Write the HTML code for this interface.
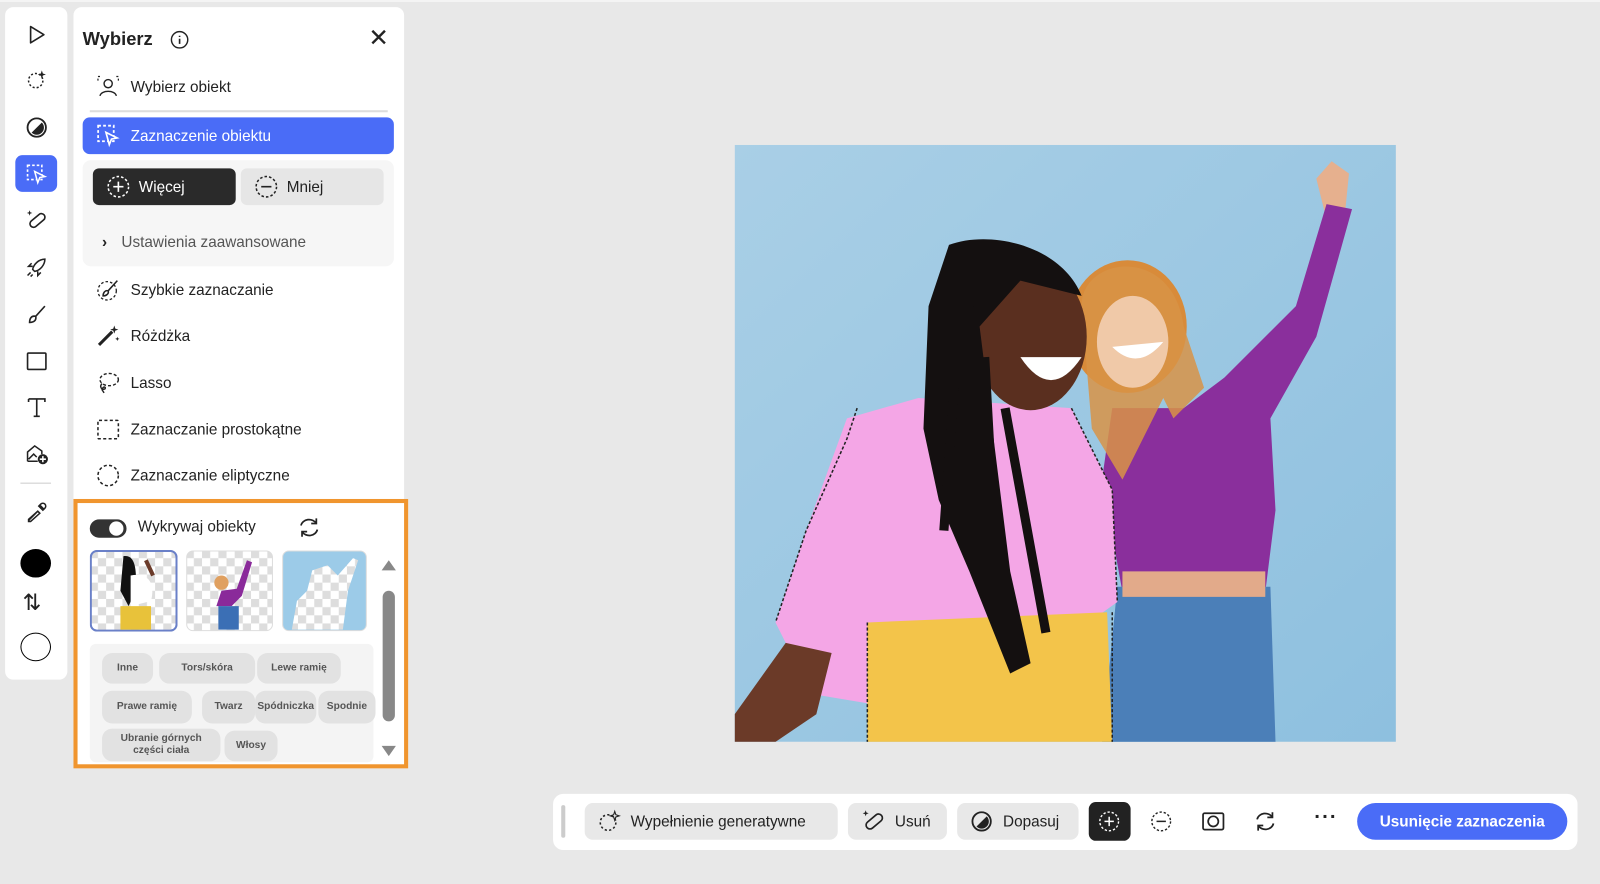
<!DOCTYPE html>
<html><head><meta charset="utf-8"><style>
*{box-sizing:border-box;margin:0;padding:0}
body{width:1600px;height:884px;background:#e8e8e8;font-family:"Liberation Sans",sans-serif;position:relative;overflow:hidden;color:#222}
#w{position:absolute;left:0;top:0;width:1568px;height:866px;transform:scale(1.0204);transform-origin:0 0}
.abs{position:absolute}
.tb{left:5px;top:7px;width:61px;height:659px;background:#fff;border-radius:8px}
.tb svg{position:absolute;left:20px}
.panel{left:72px;top:7px;width:324px;height:746px;background:#fff;border-radius:8px}
.item{position:absolute;left:22px;font-size:15px;color:#222;display:flex;align-items:center}
.item svg{margin-right:10px}
.btn{position:absolute;display:flex;align-items:center;font-size:15px;border-radius:6px}
.chip{position:absolute;background:#e2e2e2;border-radius:10px;font-size:10px;font-weight:bold;color:#555;text-align:center;display:flex;align-items:center;justify-content:center;line-height:12px}
.bb{position:absolute;top:787px;height:36px;border-radius:8px;background:#e8e8e8;display:flex;align-items:center;font-size:15px;color:#222}
</style></head><body><div id="w">
<div class="abs" style="left:0;top:0;width:1600px;height:2px;background:#f4f4f4"></div>
<div class="abs tb">
<svg style="top:16px" width="22" height="22" viewBox="0 0 22 22"><path d="M5 3 L18 11 L5 19 Z" fill="none" stroke="#222" stroke-width="1.6" stroke-linejoin="round"/></svg>
<svg style="top:60px" width="22" height="22" viewBox="0 0 22 22"><circle cx="10" cy="12" r="7" fill="none" stroke="#222" stroke-width="1.5" stroke-dasharray="2 2"/><path d="M16 2 l1 3 3 1 -3 1 -1 3 -1 -3 -3 -1 3 -1z" fill="#222"/></svg>
<svg style="top:107px" width="22" height="22" viewBox="0 0 22 22"><circle cx="11" cy="11" r="9" fill="none" stroke="#222" stroke-width="1.8"/><path d="M16 6 A7 7 0 0 1 6 16 Z" fill="#222"/></svg>
<div class="abs" style="left:10px;top:145px;width:41px;height:36px;background:#4a6cf7;border-radius:7px"></div>
<svg style="top:153px" width="22" height="22" viewBox="0 0 22 22"><rect x="2" y="2" width="14" height="14" fill="none" stroke="#fff" stroke-width="1.6" stroke-dasharray="2.5 2"/><path d="M9 8 L19 13 L14 14 L12 19 Z" fill="#4a6cf7" stroke="#fff" stroke-width="1.5"/></svg>
<svg style="top:198px" width="22" height="22" viewBox="0 0 22 22"><rect x="3" y="8" width="17" height="7" rx="3.5" transform="rotate(-40 11 11)" fill="none" stroke="#222" stroke-width="1.6"/><path d="M4 1 l.7 2 2 .7-2 .7-.7 2-.7-2-2-.7 2-.7z" fill="#222"/></svg>
<svg style="top:244px" width="22" height="22" viewBox="0 0 22 22"><path d="M19 3 C13 3 8 8 7 13 L9 15 C14 14 19 9 19 3Z M7 10 L3 10 6 7 M12 15 L12 19 15 16 M5 16 L2 19 M7 18 L5 20" fill="none" stroke="#222" stroke-width="1.5"/></svg>
<svg style="top:290px" width="22" height="22" viewBox="0 0 22 22"><path d="M19 3 L10 13 M10 13 C6 12 4 15 4 19 C8 19 11 17 10 13Z" fill="none" stroke="#222" stroke-width="1.6"/></svg>
<svg style="top:336px" width="22" height="22" viewBox="0 0 22 22"><rect x="2" y="3" width="18" height="16" rx="1" fill="none" stroke="#222" stroke-width="1.6"/></svg>
<svg style="top:381px" width="22" height="22" viewBox="0 0 22 22"><path d="M3 3 H19 V6 M3 3 V6 M11 3 V20 M8 20 H14" fill="none" stroke="#222" stroke-width="1.6"/></svg>
<svg style="top:426px" width="24" height="24" viewBox="0 0 24 24"><path d="M2 19 V10 L9 4 L16 9 V12 M2 19 H12 M3 17 L8 12 11 15" fill="none" stroke="#222" stroke-width="1.5"/><circle cx="17" cy="17" r="5" fill="#222"/><path d="M17 14v6M14 17h6" stroke="#fff" stroke-width="1.5"/></svg>
<div class="abs" style="left:15px;top:466px;width:30px;height:1px;background:#ccc"></div>
<svg style="top:484px" width="22" height="22" viewBox="0 0 22 22"><path d="M3 19 L12 10 M14 4 L18 8 M12 10 L14 12 L5 20 L3 20 L3 18 Z M13 5 L17 9 L19 7 A2.8 2.8 0 0 0 15 3Z" fill="none" stroke="#222" stroke-width="1.5"/></svg>
<div class="abs" style="left:15px;top:531px;width:30px;height:28px;background:#000;border-radius:50%"></div>
<div class="abs" style="left:17px;top:573px;font-size:22px;line-height:22px">⇅</div>
<div class="abs" style="left:15px;top:613px;width:30px;height:28px;border:1.5px solid #000;border-radius:50%"></div>
</div>

<div class="abs panel">
<div class="abs" style="left:9px;top:21px;font-size:18px;font-weight:bold">Wybierz</div>
<svg class="abs" style="left:94px;top:22px" width="20" height="20" viewBox="0 0 20 20"><circle cx="10" cy="10" r="8" fill="none" stroke="#222" stroke-width="1.4"/><path d="M10 9v5M10 6v1.2" stroke="#222" stroke-width="1.6"/></svg>
<div class="abs" style="left:289px;top:16px;font-size:24px">✕</div>
<div class="item" style="top:66px"><svg width="24" height="24" viewBox="0 0 24 24"><circle cx="12" cy="9" r="4" fill="none" stroke="#222" stroke-width="1.4"/><path d="M4 21 C5 15 19 15 20 21" fill="none" stroke="#222" stroke-width="1.4"/><path d="M2 6V2h4M22 6V2h-4" fill="none" stroke="#222" stroke-width="1.2" stroke-dasharray="2 2"/></svg>Wybierz obiekt</div>
<div class="abs" style="left:16px;top:101px;width:292px;height:2px;background:#ddd"></div>
<div class="abs" style="left:9px;top:108px;width:305px;height:36px;background:#4a6cf7;border-radius:7px"></div>
<div class="item" style="top:114px;color:#fff"><svg width="24" height="24" viewBox="0 0 22 22"><rect x="2" y="2" width="14" height="14" fill="none" stroke="#fff" stroke-width="1.6" stroke-dasharray="2.5 2"/><path d="M9 8 L19 13 L14 14 L12 19 Z" fill="#4a6cf7" stroke="#fff" stroke-width="1.5"/></svg>Zaznaczenie obiektu</div>
<div class="abs" style="left:9px;top:150px;width:305px;height:104px;background:#f6f6f6;border-radius:8px"></div>
<div class="btn" style="left:19px;top:158px;width:140px;height:36px;background:#2a2a2a;color:#fff;padding-left:13px"><svg width="24" height="24" viewBox="0 0 24 24" style="margin-right:8px"><circle cx="12" cy="12" r="10" fill="none" stroke="#fff" stroke-width="1.5" stroke-dasharray="2.5 2"/><path d="M12 7v10M7 12h10" stroke="#fff" stroke-width="1.6"/></svg>Więcej</div>
<div class="btn" style="left:164px;top:158px;width:140px;height:36px;background:#e6e6e6;padding-left:13px"><svg width="24" height="24" viewBox="0 0 24 24" style="margin-right:8px"><circle cx="12" cy="12" r="10" fill="none" stroke="#222" stroke-width="1.5" stroke-dasharray="2.5 2"/><path d="M7 12h10" stroke="#222" stroke-width="1.6"/></svg>Mniej</div>
<div class="abs" style="left:28px;top:222px;font-size:15px;color:#555"><span style="color:#222;font-weight:bold;margin-right:14px">›</span>Ustawienia zaawansowane</div>
<div class="item" style="top:265px"><svg width="24" height="24" viewBox="0 0 24 24"><circle cx="11" cy="13" r="9" fill="none" stroke="#222" stroke-width="1.3" stroke-dasharray="2.5 2"/><path d="M21 3 L12 13 M12 13 C9 12 7 15 7 18 C10 18 13 16 12 13Z" fill="#fff" stroke="#222" stroke-width="1.5"/></svg>Szybkie zaznaczanie</div>
<div class="item" style="top:310px"><svg width="24" height="24" viewBox="0 0 24 24"><path d="M3 21 L16 8" stroke="#222" stroke-width="3"/><path d="M18 2 l1 3 3 1-3 1-1 3-1-3-3-1 3-1z M21 13 l.6 1.5 1.5.6-1.5.6-.6 1.5-.6-1.5-1.5-.6 1.5-.6z" fill="#222"/></svg>Różdżka</div>
<div class="item" style="top:356px"><svg width="24" height="24" viewBox="0 0 24 24"><ellipse cx="13" cy="9" rx="9" ry="6" fill="none" stroke="#222" stroke-width="1.4" stroke-dasharray="3 2"/><path d="M6 13 C3 16 6 20 9 18 C10 16 7 15 6 19 L8 22" fill="none" stroke="#222" stroke-width="1.4"/></svg>Lasso</div>
<div class="item" style="top:402px"><svg width="24" height="24" viewBox="0 0 24 24"><rect x="2" y="3" width="20" height="18" rx="1" fill="none" stroke="#222" stroke-width="1.5" stroke-dasharray="3 2.3"/></svg>Zaznaczanie prostokątne</div>
<div class="item" style="top:447px"><svg width="24" height="24" viewBox="0 0 24 24"><circle cx="12" cy="12" r="10" fill="none" stroke="#222" stroke-width="1.5" stroke-dasharray="3 2.3"/></svg>Zaznaczanie eliptyczne</div>
<div class="abs" style="left:0;top:482px;width:328px;height:264px;border:4px solid #f0952e;background:#fff"></div>
<div class="abs" style="left:16px;top:502px;width:36px;height:18px;background:#333;border-radius:9px"></div>
<div class="abs" style="left:35px;top:504px;width:14px;height:14px;background:#fff;border-radius:50%"></div>
<div class="abs" style="left:63px;top:501px;font-size:15px">Wykrywaj obiekty</div>
<svg class="abs" style="left:219px;top:499px" width="24" height="22" viewBox="0 0 24 22"><path d="M4 9 A8 7 0 0 1 19 7 M20 13 A8 7 0 0 1 5 15" fill="none" stroke="#222" stroke-width="1.7"/><path d="M19 2v5h-5M5 20v-5h5" fill="none" stroke="#222" stroke-width="1.7"/></svg>
<svg class="abs" style="left:16px;top:532px" width="86" height="80" viewBox="0 0 86 80"><defs><pattern id="ck" width="16" height="16" patternUnits="userSpaceOnUse"><rect width="16" height="16" fill="#fff"/><rect width="8" height="8" fill="#ddd"/><rect x="8" y="8" width="8" height="8" fill="#ddd"/></pattern></defs><rect x="1" y="1" width="84" height="78" rx="6" fill="url(#ck)" stroke="#6a80c8" stroke-width="2"/><path d="M33 6 C45 4 46 20 45 40 L38 55 L30 40Z" fill="#111"/><path d="M40 25 C55 22 65 30 60 50 L40 55Z" fill="#fff"/><path d="M30 55 H60 V78 H30Z" fill="#e8c23a"/><path d="M55 10 L62 25" stroke="#6b3b2a" stroke-width="4"/></svg>
<svg class="abs" style="left:110px;top:532px" width="86" height="80" viewBox="0 0 86 80"><rect x="1" y="1" width="84" height="78" rx="6" fill="url(#ck)" stroke="#ddd"/><circle cx="35" cy="32" r="7" fill="#e0a060"/><path d="M35 40 L50 38 60 10 65 12 55 45 45 55 30 55Z" fill="#8a2a9a"/><path d="M32 55 H52 V78 H32Z" fill="#3b6fb5"/></svg>
<svg class="abs" style="left:204px;top:532px" width="84" height="80" viewBox="0 0 84 80"><rect x="1" y="1" width="82" height="78" rx="6" fill="#9ccbe8" stroke="#ddd"/><path d="M10 78 L15 50 25 40 30 20 45 15 55 25 70 8 75 10 65 40 60 78Z" fill="url(#ck)"/></svg>
<svg class="abs" style="left:300px;top:536px" width="18" height="204" viewBox="0 0 18 204"><path d="M2 16 L9 6 16 16Z" fill="#888"/><rect x="3" y="36" width="12" height="128" rx="6" fill="#888"/><path d="M2 188 L9 198 16 188Z" fill="#888"/></svg>
<div class="abs" style="left:16px;top:624px;width:278px;height:116px;background:#f4f4f4;border-radius:6px"></div>
<div class="chip" style="left:28px;top:633px;width:50px;height:30px">Inne</div>
<div class="chip" style="left:84px;top:633px;width:94px;height:30px">Tors/skóra</div>
<div class="chip" style="left:180px;top:633px;width:82px;height:30px">Lewe ramię</div>
<div class="chip" style="left:28px;top:670px;width:88px;height:32px">Prawe ramię</div>
<div class="chip" style="left:126px;top:670px;width:52px;height:32px">Twarz</div>
<div class="chip" style="left:178px;top:670px;width:60px;height:32px">Spódniczka</div>
<div class="chip" style="left:240px;top:670px;width:56px;height:32px">Spodnie</div>
<div class="chip" style="left:28px;top:707px;width:116px;height:32px">Ubranie górnych<br>części ciała</div>
<div class="chip" style="left:148px;top:709px;width:52px;height:30px">Włosy</div>
</div>

<svg class="abs" style="left:720px;top:142px" width="648" height="585" viewBox="720 142 648 585">
<defs><linearGradient id="bg" x1="0" y1="0" x2="1" y2="1"><stop offset="0" stop-color="#a9cfe6"/><stop offset="1" stop-color="#8ec0df"/></linearGradient></defs>
<rect x="720" y="142" width="648" height="585" fill="url(#bg)"/>
<path d="M1290 175 L1305 158 1322 170 1318 210 1300 215Z" fill="#e6b08e"/>
<path d="M1300 200 L1325 205 1290 330 1245 410 1250 500 1240 580 1100 580 1080 470 1090 400 1160 400 1200 370 1270 300Z" fill="#8a2f9c"/>
<path d="M1095 575 L1245 575 1250 727 1080 727Z" fill="#4b7fb8"/>
<path d="M1100 560 L1240 560 1240 585 1100 585Z" fill="#e2aa8a"/>
<ellipse cx="1105" cy="320" rx="58" ry="65" fill="#d88b3a"/>
<path d="M1060 300 C1060 250 1150 240 1160 320 L1180 380 1150 410 1140 390 1100 470 1070 420Z" fill="#d89346" opacity=".85"/>
<ellipse cx="1110" cy="335" rx="35" ry="45" fill="#f0c9a8"/>
<path d="M1090 340 Q1115 365 1140 335 Z" fill="#fff"/>
<path d="M830 410 L900 390 1050 400 1090 480 1095 590 1060 615 880 610 855 690 795 680 760 610 790 520Z" fill="#f4a6e6"/>
<path d="M850 610 L1085 600 1090 727 850 727Z" fill="#f3c44a"/>
<path d="M720 700 L770 630 815 640 800 700 760 727 720 727Z" fill="#6b3a28"/>
<ellipse cx="1010" cy="330" rx="55" ry="72" fill="#5a2f1f"/>
<path d="M1000 350 Q1030 395 1060 350 Z" fill="#fff"/>
<path d="M930 240 C970 225 1040 240 1060 290 L1000 275 960 320 990 560 1010 650 990 660 950 560 920 490 905 420 910 300Z" fill="#141010"/>
<path d="M950 300 L940 500 M965 350 L980 620 M935 380 L925 520 M985 400 L1025 620" stroke="#141010" stroke-width="9" fill="none"/>
<path d="M840 400 L830 430 790 520 760 610 M850 610 L850 727 M1090 600 L1090 727 M1050 400 L1090 480 1095 590" stroke="#222" stroke-width="1.5" stroke-dasharray="3 2" fill="none"/>
</svg>

<div class="abs" style="left:542px;top:778px;width:1004px;height:55px;background:#fff;border-radius:10px"></div>
<div class="abs" style="left:550px;top:789px;width:4px;height:32px;background:#ccc;border-radius:2px"></div>
<div class="bb" style="left:573px;width:248px;padding-left:12px"><svg width="24" height="24" viewBox="0 0 22 22" style="margin-right:9px"><circle cx="10" cy="12" r="7" fill="none" stroke="#222" stroke-width="1.4" stroke-dasharray="2 2"/><path d="M16 2 l1 3 3 1 -3 1 -1 3 -1 -3 -3 -1 3 -1z" fill="none" stroke="#222"/></svg>Wypełnienie generatywne</div>
<div class="bb" style="left:831px;width:97px;padding-left:13px"><svg width="24" height="24" viewBox="0 0 22 22" style="margin-right:9px"><rect x="3" y="8" width="17" height="7" rx="3.5" transform="rotate(-40 11 11)" fill="none" stroke="#222" stroke-width="1.5"/><path d="M4 1 l.7 2 2 .7-2 .7-.7 2-.7-2-2-.7 2-.7z" fill="#222"/></svg>Usuń</div>
<div class="bb" style="left:938px;width:119px;padding-left:13px"><svg width="22" height="22" viewBox="0 0 22 22" style="margin-right:10px"><circle cx="11" cy="11" r="9" fill="none" stroke="#222" stroke-width="1.8"/><path d="M16 6 A7 7 0 0 1 6 16 Z" fill="#222"/></svg>Dopasuj</div>
<div class="abs" style="left:1067px;top:786px;width:41px;height:38px;background:#222;border-radius:7px"></div>
<svg class="abs" style="left:1076px;top:794px" width="22" height="22" viewBox="0 0 24 24"><circle cx="12" cy="12" r="10" fill="none" stroke="#fff" stroke-width="1.5" stroke-dasharray="2.5 2"/><path d="M12 7v10M7 12h10" stroke="#fff" stroke-width="1.6"/></svg>
<svg class="abs" style="left:1127px;top:794px" width="22" height="22" viewBox="0 0 24 24"><circle cx="12" cy="12" r="10" fill="none" stroke="#222" stroke-width="1.5" stroke-dasharray="2.5 2"/><path d="M7 12h10" stroke="#222" stroke-width="1.6"/></svg>
<svg class="abs" style="left:1177px;top:795px" width="24" height="20" viewBox="0 0 24 20"><rect x="2" y="2" width="20" height="16" rx="1.5" fill="none" stroke="#222" stroke-width="1.7"/><circle cx="12" cy="10" r="5" fill="none" stroke="#222" stroke-width="1.7"/></svg>
<svg class="abs" style="left:1228px;top:794px" width="24" height="22" viewBox="0 0 24 22"><path d="M4 9 A8 7 0 0 1 19 7 M20 13 A8 7 0 0 1 5 15" fill="none" stroke="#222" stroke-width="1.7"/><path d="M19 2v5h-5M5 20v-5h5" fill="none" stroke="#222" stroke-width="1.7"/></svg>
<div class="abs" style="left:1288px;top:790px;font-size:20px;font-weight:bold;letter-spacing:1px">···</div>
<div class="abs" style="left:1330px;top:787px;width:206px;height:36px;background:#4a6cf7;border-radius:18px;color:#fff;font-size:15px;font-weight:bold;display:flex;align-items:center;justify-content:center">Usunięcie zaznaczenia</div>
</div></body></html>
